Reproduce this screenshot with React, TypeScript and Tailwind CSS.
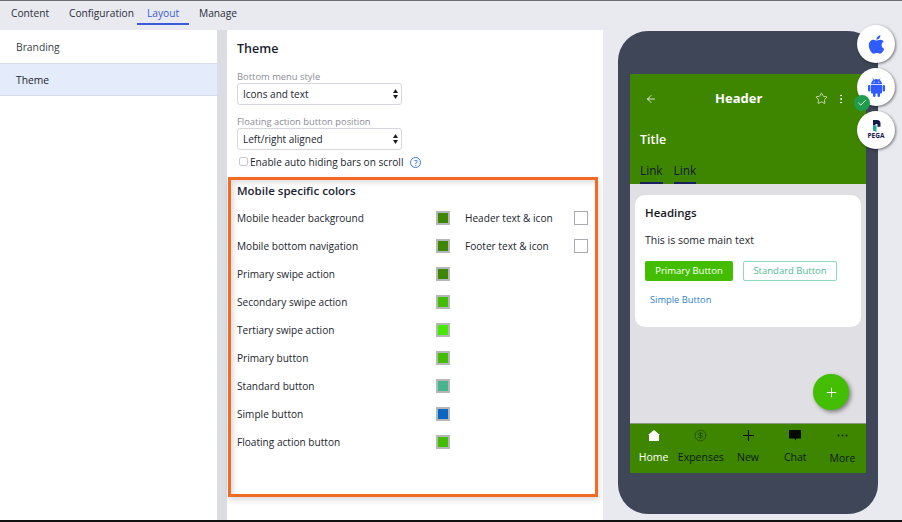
import React from 'react';
import { FaApple } from 'react-icons/fa';
import { ArrowLeft, Star, MoreVertical, Plus, Check, CircleDollarSign } from 'lucide-react';

const tabs = [
  { label: 'Content', className: 'w-[58px] pl-[11px]' },
  { label: 'Configuration', className: 'w-[79px] pl-[11px]' },
  { label: 'Layout', className: 'w-[52px] text-center text-[#3b5bdb] border-b-2 border-[#3b5bdb]' },
  { label: 'Manage', className: 'w-[60px] pl-[10px]' },
];

const colorRows = [
  { label: 'Mobile header background', color: '#3f8600', extra: 'Header text & icon' },
  { label: 'Mobile bottom navigation', color: '#3f8600', extra: 'Footer text & icon' },
  { label: 'Primary swipe action', color: '#3f8600' },
  { label: 'Secondary swipe action', color: '#43bd00' },
  { label: 'Tertiary swipe action', color: '#46e800' },
  { label: 'Primary button', color: '#43bd00' },
  { label: 'Standard button', color: '#46b58e' },
  { label: 'Simple button', color: '#0a66c2' },
  { label: 'Floating action button', color: '#43bd00' },
];

const Swatch: React.FC<{ color: string }> = ({ color }) => (
  <span className="block w-[14px] h-[14px] border-2 border-[#b4b8b4]" style={{ backgroundColor: color }} />
);

const SelectField: React.FC<{ label: string; value: string; className?: string }> = ({ label, value, className }) => (
  <div className={className}>
    <div className="text-[9.4px] leading-[12px] text-[#8a8d96]">{label}</div>
    <div className="relative w-[165px] h-[22px]">
      <select
        defaultValue={value}
        className="block w-full h-full appearance-none bg-white border border-[#d5d7dd] rounded-[3px] pl-[5px] text-[10px] text-[#22252e]"
      >
        <option>{value}</option>
      </select>
      <svg className="absolute right-[4px] top-[6px]" width="5" height="10" viewBox="0 0 5 10">
        <path d="M2.5 0L5 4H0zM2.5 10L0 6h5z" fill="#1b1d26" />
      </svg>
    </div>
  </div>
);

const NavItem: React.FC<{ label: string; icon: React.ReactNode; active?: boolean; labelClass?: string }> = ({ label, icon, active, labelClass }) => (
  <div className={`flex-1 flex flex-col items-center ${active ? 'text-white' : 'text-[#0d1a06]'}`}>
    <div className="h-[22px] flex items-center justify-center">{icon}</div>
    <div className={`text-[10.5px] leading-[14px] mt-[4px] whitespace-nowrap ${labelClass ?? ''}`}>{label}</div>
  </div>
);

const PhonePreview = () => (
  <div className="relative ml-[15px] mt-[1px] w-[260px] h-[483px] rounded-[30px] bg-[#3e4658] pt-[43px] px-[12px]">
    <div className="w-[236px] h-[399px] bg-[#e0e0e4] flex flex-col">
      {/* Green header */}
      <div className="h-[110px] bg-[#3f8600] px-[10px] text-white">
        <div className="relative flex items-center h-[49px]">
          <ArrowLeft size={12} strokeWidth={1.6} className="ml-[5px]" />
          <span className="absolute left-[75px] text-[13px] font-bold">Header</span>
          <Star size={13} strokeWidth={1.2} className="ml-[158px]" />
          <MoreVertical size={12} strokeWidth={2} className="ml-[7px]" />
        </div>
        <div className="text-[12.5px] leading-[18px] font-semibold mt-[8px]">Title</div>
        <div className="flex gap-[11px] mt-[11px] text-[11.8px] leading-[20px] text-[#10182e]">
          <span className="border-b-2 border-[#1b1f5e] h-[24px]">Link</span>
          <span className="border-b-2 border-[#1b1f5e] h-[24px]">Link</span>
        </div>
      </div>
      {/* Content card */}
      <div className="mx-[5px] mt-[11px] h-[132px] bg-white rounded-[10px] pl-[10px] pt-[10px]">
        <div className="text-[11.5px] leading-[16px] font-semibold text-[#16181d]">Headings</div>
        <div className="text-[10.5px] leading-[14px] text-[#22252e] mt-[12px]">This is some main text</div>
        <div className="flex gap-[10px] mt-[14px]">
          <div className="w-[88px] h-[20px] rounded-[2px] bg-[#43bd00] text-white text-[9.5px] leading-[20px] text-center">Primary Button</div>
          <div className="w-[94px] h-[20px] rounded-[2px] border border-[#8fd9bd] text-[#4fbb92] text-[9.5px] leading-[18px] text-center">Standard Button</div>
        </div>
        <div className="text-[9.3px] leading-[14px] text-[#2f7fd0] mt-[12px] ml-[5px]">Simple Button</div>
      </div>
      {/* FAB */}
      <div className="flex-1 relative">
        <div className="absolute right-[17px] top-[47px] w-[36px] h-[36px] rounded-full bg-[#43bd00] text-white flex items-center justify-center shadow-[2px_2px_4px_rgba(0,0,0,0.45)]">
          <Plus size={15} strokeWidth={1.6} />
        </div>
      </div>
      {/* Bottom nav */}
      <div className="h-[50px] bg-[#3f8600] flex border-t border-[#8c9a84]">
        <NavItem
          label="Home"
          active
          icon={
            <svg width="12" height="11" viewBox="0 0 12 11">
              <path d="M6 0l6 5h-1v6H1V5H0z" fill="white" />
            </svg>
          }
        />
        <NavItem label="Expenses" icon={<CircleDollarSign size={13} strokeWidth={1.2} color="#173a05" />} />
        <NavItem
          label="New"
          icon={
            <svg width="11" height="11" viewBox="0 0 11 11">
              <path d="M5.5 0v11M0 5.5h11" stroke="#050b02" strokeWidth="1.1" />
            </svg>
          }
        />
        <NavItem
          label="Chat"
          icon={
            <svg width="12" height="11" viewBox="0 0 12 11">
              <path d="M0 0h12v8.5H7.5L6.5 10.5 5.5 8.5H0z" fill="#050b02" />
            </svg>
          }
        />
        <NavItem
          label="More"
          labelClass="translate-y-[1px]"
          icon={
            <svg width="11" height="3" viewBox="0 0 11 3">
              <circle cx="1.5" cy="1.5" r="1" fill="#15300a" />
              <circle cx="5.5" cy="1.5" r="1" fill="#15300a" />
              <circle cx="9.5" cy="1.5" r="1" fill="#15300a" />
            </svg>
          }
        />
      </div>
    </div>

    {/* Platform buttons */}
    <div className="absolute left-[239px] top-[-6px] flex flex-col gap-[5px]">
      <div className="w-[38px] h-[38px] rounded-full bg-white flex items-center justify-center shadow-[1px_1px_3px_rgba(0,0,0,0.5)]">
        <FaApple size={21} color="#2f5bff" />
      </div>
      <div className="w-[38px] h-[38px] rounded-full bg-white flex items-center justify-center shadow-[1px_1px_3px_rgba(0,0,0,0.5)]">
        <svg width="17" height="19" viewBox="0 0 17 19">
          <path d="M4.8 0.4L6 2.4M12.2 0.4L11 2.4" stroke="#2f5bff" strokeWidth="0.8" />
          <path d="M3 6.2a5.5 5.2 0 0 1 11 0z" fill="#2f5bff" />
          <circle cx="6.2" cy="4.2" r="0.6" fill="white" />
          <circle cx="10.8" cy="4.2" r="0.6" fill="white" />
          <path d="M3 7h11v7.5a1 1 0 0 1-1 1H4a1 1 0 0 1-1-1z" fill="#2f5bff" />
          <rect x="0" y="7" width="2.4" height="6.5" rx="1.2" fill="#2f5bff" />
          <rect x="14.6" y="7" width="2.4" height="6.5" rx="1.2" fill="#2f5bff" />
          <rect x="5" y="14" width="2.5" height="5" rx="1.2" fill="#2f5bff" />
          <rect x="9.5" y="14" width="2.5" height="5" rx="1.2" fill="#2f5bff" />
        </svg>
      </div>
      <div className="w-[38px] h-[38px] rounded-full bg-white flex flex-col items-center justify-center shadow-[1px_1px_3px_rgba(0,0,0,0.5)]">
        <svg width="9" height="12" viewBox="0 0 9 12">
          <path d="M1 0h4a3.5 3.5 0 0 1 3.5 3.5v3L5.5 7V4H3.5V5.5H1z" fill="#141a4a" />
          <path d="M1 5.5h3.5V12L1 10.5z" fill="#1fa7a0" />
        </svg>
        <span className="text-[6.5px] leading-[8px] font-bold text-[#141a4a]">PEGA</span>
      </div>
    </div>
    <div className="absolute left-[236px] top-[64px] w-[16px] h-[16px] rounded-full bg-[#1f9d4d] text-white flex items-center justify-center">
      <Check size={10} strokeWidth={2.2} />
    </div>
  </div>
);

export default function App() {
  return (
    <div className="w-[902px] h-[522px] overflow-hidden flex flex-col bg-[#e8eaf0] border-t border-[#6b6d73] border-b-2 border-b-[#111] font-['Open_Sans',sans-serif]">
      <div className="h-[29px] shrink-0 flex text-[10.2px] leading-[24px] text-[#2a2e3a]">
        {tabs.map(t => (
          <div key={t.label} className={`h-[24px] whitespace-nowrap ${t.className}`}>{t.label}</div>
        ))}
      </div>

      <div className="flex-1 flex min-h-0">
        <div className="w-[217px] bg-white text-[10.3px] text-[#22252e]">
          <div className="h-[33px] pl-[16px] leading-[34px] text-[#3a3e4a]">Branding</div>
          <div className="h-[33px] pl-[16px] leading-[32px] bg-[#e4ebfb] border-y border-[#d8dde8]">Theme</div>
        </div>
        <div className="w-[10px] bg-[#dcdde3]" />

        <div className="w-[376px] bg-white pt-[11px]">
          <h2 className="pl-[10px] text-[12.5px] leading-[16px] font-semibold text-[#1b1e33]">Theme</h2>
          <div className="pl-[10px]">
            <SelectField label="Bottom menu style" value="Icons and text" className="mt-[14px]" />
            <SelectField label="Floating action button position" value="Left/right aligned" className="mt-[11px]" />
            <div className="flex items-center h-[16px] mt-[5px] text-[10.1px] text-[#22252e]">
              <input type="checkbox" className="appearance-none w-[9px] h-[9px] border border-[#c8cad0] rounded-[2px] ml-[2px] mr-[2px] -mt-[4px]" />
              <span>Enable auto hiding bars on scroll</span>
              <span className="ml-[7px] -mt-[1px] w-[11px] h-[11px] rounded-full border border-[#3b7de0] text-[#3b7de0] text-[8px] leading-[9px] text-center font-semibold">?</span>
            </div>
          </div>

          <section className="relative mt-[6px] ml-[1px] w-[370px] h-[320px] border-[3px] border-[#f26b25] pl-[6px] pt-[3px] shadow-[inset_3px_3px_5px_rgba(0,0,0,0.12),1px_3px_6px_rgba(0,0,0,0.15)]">
            <h3 className="text-[11.5px] leading-[16px] font-semibold text-[#1b1e33]">Mobile specific colors</h3>
            <div className="mt-[5px]">
              {colorRows.map(r => (
                <div key={r.label} className="h-[28px] flex items-center text-[10.1px] text-[#22252e]">
                  <span className="w-[199px] whitespace-nowrap pt-[2px]">{r.label}</span>
                  <Swatch color={r.color} />
                  {r.extra && (
                    <>
                      <span className="w-[109px] ml-[15px] whitespace-nowrap pt-[2px]">{r.extra}</span>
                      <span className="block w-[14px] h-[14px] bg-white border border-[#a8abb0]" />
                    </>
                  )}
                </div>
              ))}
            </div>
          </section>
        </div>

        <PhonePreview />
      </div>
    </div>
  );
}
